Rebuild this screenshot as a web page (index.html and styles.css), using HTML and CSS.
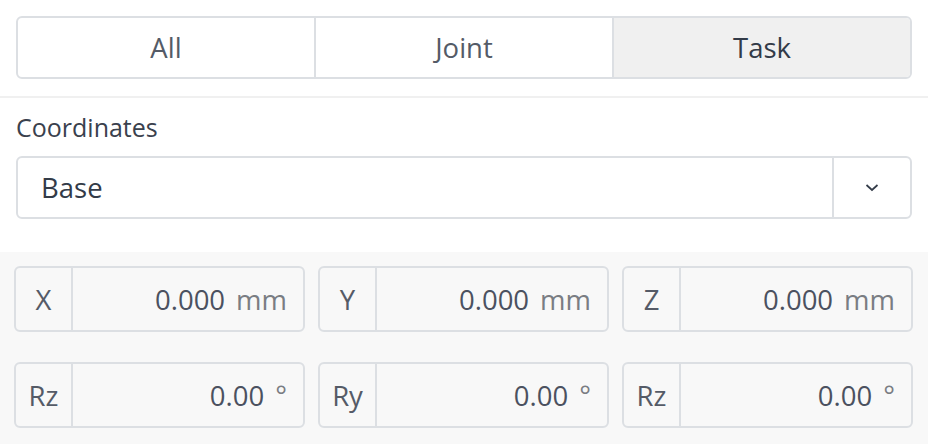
FILE: index.html
```html
<!DOCTYPE html>
<html>
<head>
<meta charset="utf-8">
<link rel="stylesheet" href="styles.css">
</head>
<body>
<div class="top">
  <div class="tabs">
    <div class="tab">All</div>
    <div class="tab">Joint</div>
    <div class="tab active">Task</div>
  </div>
</div>
<div class="rule"></div>
<div class="coords">
  <div class="label">Coordinates</div>
  <div class="select">
    <div class="select-value">Base</div>
    <div class="select-btn">
      <svg width="14" height="9" viewBox="0 0 14 9"><path d="M1.5 2 L7 7 L12.5 2" fill="none" stroke="#333b48" stroke-width="1.7"/></svg>
    </div>
  </div>
</div>
<div class="fields">
  <div class="group"><div class="g-label">X</div><div class="g-value">0.000<span class="unit">mm</span></div></div>
  <div class="group"><div class="g-label">Y</div><div class="g-value">0.000<span class="unit">mm</span></div></div>
  <div class="group"><div class="g-label">Z</div><div class="g-value">0.000<span class="unit">mm</span></div></div>
  <div class="group"><div class="g-label">Rz</div><div class="g-value">0.00<span class="unit">°</span></div></div>
  <div class="group"><div class="g-label">Ry</div><div class="g-value">0.00<span class="unit">°</span></div></div>
  <div class="group"><div class="g-label">Rz</div><div class="g-value">0.00<span class="unit">°</span></div></div>
</div>
</body>
</html>
```

FILE: styles.css
```css
* { box-sizing: border-box; }
body {
  margin: 0;
  background: #ffffff;
  font-family: "Open Sans", "Noto Sans", sans-serif;
  color: #333b48;
}
.top {
  padding: 16px 16px 17px;
}
.tabs {
  display: flex;
  height: 63px;
  border: 2px solid #dcdfe3;
  border-radius: 6px;
  overflow: hidden;
}
.tab {
  flex: 1;
  display: flex;
  align-items: center;
  justify-content: center;
  font-size: 27.5px;
  color: #545b67;
}
.tab + .tab {
  border-left: 2px solid #dcdfe3;
}
.tab.active {
  background: #f0f0f0;
  color: #333b48;
}
.rule {
  height: 2px;
  background: #f0f0f0;
}
.coords {
  padding: 14px 16px 33px;
}
.label {
  font-size: 25px;
  line-height: 30px;
  color: #3a414d;
}
.select {
  margin-top: 14px;
  height: 63px;
  display: flex;
  border: 2px solid #dcdfe3;
  border-radius: 6px;
}
.select-value {
  flex: 1;
  display: flex;
  align-items: center;
  padding-left: 23px;
  font-size: 27.5px;
  color: #333b48;
}
.select-btn {
  width: 78px;
  border-left: 2px solid #dcdfe3;
  display: flex;
  align-items: center;
  justify-content: center;
}
.fields {
  background: #f8f8f8;
  padding: 14px 15px 16px 14px;
  display: grid;
  grid-template-columns: repeat(3, 1fr);
  column-gap: 13px;
  row-gap: 30px;
}
.group {
  height: 66px;
  display: flex;
  border: 2px solid #dcdfe3;
  border-radius: 6px;
}
.g-label {
  width: 57px;
  border-right: 2px solid #dcdfe3;
  display: flex;
  align-items: center;
  justify-content: center;
  font-size: 27.5px;
  color: #555b67;
}
.g-value {
  flex: 1;
  display: flex;
  align-items: center;
  justify-content: flex-end;
  padding-right: 16px;
  font-size: 27.5px;
  color: #4b5160;
}
.unit {
  margin-left: 11px;
  color: #7a7d83;
}
```
